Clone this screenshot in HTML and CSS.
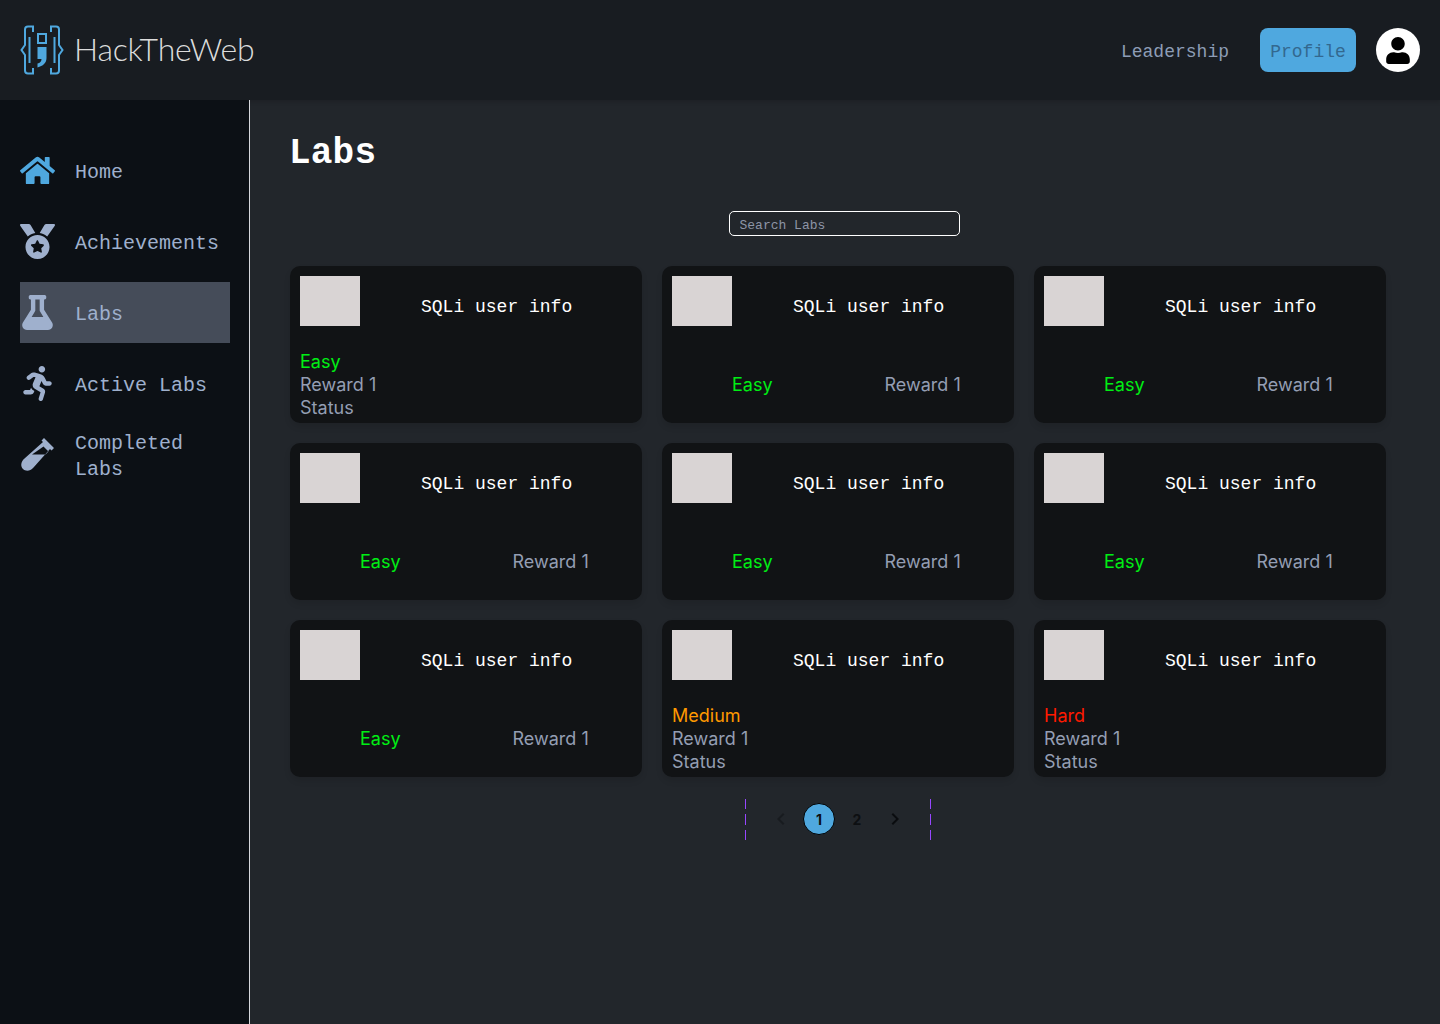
FILE: index.html
```html
<!DOCTYPE html>
<html lang="en">
<head>
  <meta charset="UTF-8">
  <title>HackTheWeb - Labs</title>
  <link rel="stylesheet" href="styles.css">
</head>
<body>
  <!-- Top bar -->
  <header class="topbar">
    <div class="brand">
      <svg class="brand-mark" viewBox="0 0 44 50" fill="none" stroke="#4fa8df" stroke-width="2">
        <path d="M13 7V1.500H8Q5 1.500 5 4.500V20L1.500 25L5 30V45.500Q5 48.500 8 48.500H13V43"/>
        <path d="M9.500 12V38"/>
        <g transform="matrix(-1 0 0 1 44 0)">
          <path d="M13 7V1.500H8Q5 1.500 5 4.500V20L1.500 25L5 30V45.500Q5 48.500 8 48.500H13V43"/>
          <path d="M9.500 12V38"/>
        </g>
        <rect x="18" y="9" width="8" height="9"/>
        <path d="M17.500 22H26.500V33C26.500 38 23 41 17.500 42.500V38.500C20 38 21.500 36.500 21.500 34H17.500Z" fill="#4fa8df" stroke="none"/>
      </svg>
      <span class="brand-name">HackTheWeb</span>
    </div>
    <nav class="topnav">
      <a class="topnav-link" href="#">Leadership</a>
      <a class="profile-btn" href="#">Profile</a>
      <span class="avatar">
        <svg viewBox="0 0 448 512"><path d="M224 256c70.700 0 128-57.300 128-128S294.700 0 224 0 96 57.300 96 128s57.300 128 128 128zm89.600 32h-16.700c-22.200 10.200-46.900 16-72.900 16s-50.600-5.800-72.900-16h-16.700C60.200 288 0 348.200 0 422.400V464c0 26.500 21.500 48 48 48h352c26.500 0 48-21.500 48-48v-41.600c0-74.200-60.200-134.400-134.400-134.400z"/></svg>
      </span>
    </nav>
  </header>

  <div class="layout">
    <!-- Sidebar -->
    <aside class="sidebar">
      <a class="side-item" href="#">
        <svg class="side-icon side-icon-home" viewBox="0 0 576 512"><path d="M280.370 148.260L96 300.110V464a16 16 0 0 0 16 16l112.060-.29a16 16 0 0 0 15.920-16V368a16 16 0 0 1 16-16h64a16 16 0 0 1 16 16v95.640a16 16 0 0 0 16 16.050L464 480a16 16 0 0 0 16-16V300L295.670 148.260a12.190 12.190 0 0 0-15.300 0zM571.600 251.470L488 182.560V44.050a12 12 0 0 0-12-12h-56a12 12 0 0 0-12 12v72.610L318.470 43a48 48 0 0 0-61 0L4.340 251.470a12 12 0 0 0-1.600 16.900l25.500 31A12 12 0 0 0 45.150 301l235.220-193.740a12.190 12.190 0 0 1 15.300 0L530.900 301a12 12 0 0 0 16.900-1.600l25.500-31a12 12 0 0 0-1.700-16.930z"/></svg>
        <span>Home</span>
      </a>
      <a class="side-item" href="#">
        <svg class="side-icon" viewBox="0 0 512 512"><path d="M223.750 130.750L154.620 15.540A31.997 31.997 0 0 0 127.180 0H16.030C3.080 0-4.500 14.570 2.920 25.180l111.270 158.960c29.720-27.770 67.520-46.830 109.560-53.390zM495.970 0H384.820c-11.240 0-21.660 5.900-27.440 15.540l-69.130 115.210c42.040 6.560 79.840 25.620 109.560 53.380L509.080 25.180C516.500 14.570 508.920 0 495.970 0zM256 160c-97.200 0-176 78.800-176 176s78.800 176 176 176 176-78.800 176-176-78.800-176-176-176zm92.520 157.260l-37.930 36.960 8.970 52.220c1.600 9.360-8.260 16.510-16.650 12.090L256 393.880l-46.900 24.650c-8.400 4.450-18.250-2.740-16.650-12.090l8.970-52.220-37.930-36.960c-6.820-6.640-3.050-18.230 6.350-19.590l52.430-7.640 23.430-47.520c1.780-3.560 5.220-5.400 8.660-5.400 3.400 0 6.860 1.800 8.600 5.400l23.430 47.520 52.430 7.640c9.400 1.360 13.170 12.950 6.350 19.590z"/></svg>
        <span>Achievements</span>
      </a>
      <a class="side-item side-item-active" href="#">
        <svg class="side-icon" viewBox="0 0 448 512"><path d="M437.200 403.500L320 215V64h8c13.300 0 24-10.700 24-24V24c0-13.300-10.700-24-24-24H120c-13.300 0-24 10.700-24 24v16c0 13.300 10.700 24 24 24h8v151L10.800 403.500C-18.500 450.600 15.300 512 70.900 512h306.200c55.700 0 89.400-61.500 60.100-108.500zM137.900 320l48.200-77.600c3.700-5.200 5.800-11.600 5.800-18.400V64h64v160c0 6.900 2.200 13.200 5.800 18.400l48.200 77.600h-172z"/></svg>
        <span>Labs</span>
      </a>
      <a class="side-item" href="#">
        <svg class="side-icon" viewBox="0 0 416 512"><path d="M272 96c26.510 0 48-21.490 48-48S298.510 0 272 0s-48 21.490-48 48 21.490 48 48 48zM113.690 317.470l-14.800 34.520H32c-17.670 0-32 14.330-32 32s14.330 32 32 32h77.450c19.250 0 36.580-11.440 44.110-29.090l8.790-20.520-10.670-6.300c-17.320-10.230-30.060-25.370-37.990-42.610zM384 223.990h-44.030l-26.060-53.250c-12.500-25.550-35.450-44.230-61.780-50.940l-71.080-21.140c-28.300-6.800-57.770-.55-80.840 17.140l-39.670 30.410c-14.030 10.750-16.690 30.830-5.920 44.860s30.840 16.660 44.860 5.920l39.690-30.410c7.670-5.890 17.440-8 25.270-6.140l14.700 4.370-37.460 87.390c-12.620 29.480-1.310 64.010 26.300 80.310l84.980 50.170-27.470 87.730c-5.280 16.860 4.110 34.810 20.970 40.090 3.190 1 6.410 1.480 9.580 1.480 13.610 0 26.230-8.770 30.520-22.450l31.640-101.060c5.910-20.770-2.890-43.080-21.640-54.390l-61.240-36.140 31.310-78.280 20.270 41.430c8 16.340 24.920 26.890 43.110 26.890H384c17.670 0 32-14.330 32-32s-14.330-31.990-32-31.990z"/></svg>
        <span>Active Labs</span>
      </a>
      <a class="side-item" href="#">
        <svg class="side-icon" viewBox="0 0 35 35"><path fill-rule="evenodd" d="M24 1L34 11L31.500 13.500L30 12L13.500 30.500C10 34.500 5.500 34.500 3 32C.5 29.500.5 25 4.500 21.500L23 5L21.500 3.500ZM23.500 9.500L12 17.500H25.500L28.500 14.500Z"/></svg>
        <span>Completed<br>Labs</span>
      </a>
    </aside>

    <!-- Main content -->
    <main class="content">
      <h1 class="page-title">Labs</h1>
      <div class="search-row">
        <input class="search-input" type="text" placeholder="Search Labs">
      </div>

      <div class="lab-grid">
        <div class="lab-card">
          <div class="lab-head"><div class="lab-thumb"></div><div class="lab-title">SQLi user info</div></div>
          <div class="lab-stack"><span class="easy">Easy</span><span>Reward 1</span><span>Status</span></div>
        </div>
        <div class="lab-card">
          <div class="lab-head"><div class="lab-thumb"></div><div class="lab-title">SQLi user info</div></div>
          <div class="lab-meta"><span class="easy">Easy</span><span>Reward 1</span></div>
        </div>
        <div class="lab-card">
          <div class="lab-head"><div class="lab-thumb"></div><div class="lab-title">SQLi user info</div></div>
          <div class="lab-meta"><span class="easy">Easy</span><span>Reward 1</span></div>
        </div>
        <div class="lab-card">
          <div class="lab-head"><div class="lab-thumb"></div><div class="lab-title">SQLi user info</div></div>
          <div class="lab-meta"><span class="easy">Easy</span><span>Reward 1</span></div>
        </div>
        <div class="lab-card">
          <div class="lab-head"><div class="lab-thumb"></div><div class="lab-title">SQLi user info</div></div>
          <div class="lab-meta"><span class="easy">Easy</span><span>Reward 1</span></div>
        </div>
        <div class="lab-card">
          <div class="lab-head"><div class="lab-thumb"></div><div class="lab-title">SQLi user info</div></div>
          <div class="lab-meta"><span class="easy">Easy</span><span>Reward 1</span></div>
        </div>
        <div class="lab-card">
          <div class="lab-head"><div class="lab-thumb"></div><div class="lab-title">SQLi user info</div></div>
          <div class="lab-meta"><span class="easy">Easy</span><span>Reward 1</span></div>
        </div>
        <div class="lab-card">
          <div class="lab-head"><div class="lab-thumb"></div><div class="lab-title">SQLi user info</div></div>
          <div class="lab-stack"><span class="medium">Medium</span><span>Reward 1</span><span>Status</span></div>
        </div>
        <div class="lab-card">
          <div class="lab-head"><div class="lab-thumb"></div><div class="lab-title">SQLi user info</div></div>
          <div class="lab-stack"><span class="hard">Hard</span><span>Reward 1</span><span>Status</span></div>
        </div>
      </div>

      <!-- Pagination -->
      <div class="pager">
        <svg class="pager-arrow pager-arrow-off" viewBox="0 0 24 24"><path d="M15.410 7.410 14 6l-6 6 6 6 1.410-1.410L10.830 12z"/></svg>
        <span class="pager-num pager-num-on">1</span>
        <span class="pager-num">2</span>
        <svg class="pager-arrow" viewBox="0 0 24 24"><path d="M10 6 8.590 7.410 13.170 12l-4.580 4.590L10 18l6-6z"/></svg>
      </div>
    </main>
  </div>
</body>
</html>
```

FILE: styles.css
```css
* {
  margin: 0;
  padding: 0;
  box-sizing: border-box;
}

body {
  font-family: "Inter", "Liberation Sans", sans-serif;
  background-color: #22262b;
  color: #fff;
  height: 1024px;
  overflow: hidden;
}

a {
  text-decoration: none;
}

/* Top bar */
.topbar {
  height: 100px;
  background-color: #181c21;
  display: flex;
  align-items: center;
  justify-content: space-between;
  padding: 0 20px;
  box-shadow: 0 2px 4px rgba(0, 0, 0, 0.15);
}

.brand {
  display: flex;
  align-items: center;
  gap: 10px;
}

.brand-mark {
  width: 44px;
  height: 50px;
}

.brand-name {
  font-family: "Lato", sans-serif;
  font-weight: 300;
  font-size: 32px;
  letter-spacing: -0.2px;
  color: #dcdcdc;
  padding-bottom: 4px;
}

.topnav {
  display: flex;
  align-items: center;
}

.topnav-link,
.profile-btn {
  font-family: "Liberation Mono", monospace;
  font-size: 18px;
}

.topnav-link {
  color: #8d9db6;
  margin-right: 31px;
  padding-top: 4px;
}

.profile-btn {
  width: 96px;
  height: 44px;
  line-height: 48px;
  text-align: center;
  background-color: #4fa8df;
  color: #33688f;
  border-radius: 8px;
  margin-right: 20px;
}

.avatar {
  width: 44px;
  height: 44px;
  border-radius: 50%;
  background-color: #fff;
  display: flex;
  align-items: center;
  justify-content: center;
}

.avatar svg {
  width: 24px;
  height: 27px;
}

/* Layout */
.layout {
  display: flex;
  height: 924px;
}

.sidebar {
  width: 250px;
  background-color: #0c1015;
  border-right: 1px solid #d6d8dc;
  padding: 40px 19px 0 20px;
}

.side-item {
  display: flex;
  align-items: center;
  height: 61px;
  margin-bottom: 10px;
  font-family: "Liberation Mono", monospace;
  font-size: 20px;
  line-height: 26px;
  color: #9fb0cd;
}

.side-item span {
  margin-left: 20px;
  padding-top: 4px;
}

.side-item-active {
  background-color: #454c59;
}

.side-icon {
  width: 35px;
  height: 35px;
  fill: #9fb0cd;
  flex-shrink: 0;
}

.side-icon-home {
  fill: #4fa8df;
}

/* Main */
.content {
  flex: 1;
  padding: 31px 54px 0 40px;
}

.page-title {
  font-family: "Liberation Mono", monospace;
  font-size: 36px;
  line-height: 46px;
  font-weight: 700;
  color: #fff;
  letter-spacing: 0.2px;
  margin-left: -1px;
}

.search-row {
  display: flex;
  justify-content: center;
  margin-top: 34px;
  margin-left: 12px;
}

.search-input {
  width: 231px;
  height: 25px;
  background: transparent;
  border: 1px solid #fff;
  border-radius: 5px;
  padding: 3px 9px 0 10px;
  font-family: "Liberation Mono", monospace;
  font-size: 13px;
  color: #fff;
}

.search-input::placeholder {
  color: #8d95a6;
  opacity: 1;
}

.lab-grid {
  display: grid;
  grid-template-columns: repeat(3, 352px);
  grid-auto-rows: 157px;
  gap: 20px;
  margin-top: 30px;
}

.lab-card {
  background-color: #111315;
  border-radius: 10px;
  padding: 10px;
  box-shadow: 0 4px 6px rgba(0, 0, 0, 0.1);
  font-size: 18px;
  line-height: 23px;
  color: #949eb3;
}

.lab-head {
  display: flex;
  height: 50px;
}

.lab-thumb {
  width: 60px;
  height: 50px;
  background-color: #d9d4d4;
}

.lab-title {
  margin-left: 61px;
  padding-top: 19px;
  font-family: "Liberation Mono", monospace;
  font-size: 18px;
  line-height: 24px;
  color: #fff;
}

.lab-stack {
  display: flex;
  flex-direction: column;
  margin-top: 24px;
}

.lab-meta {
  display: flex;
  gap: 112px;
  margin-top: 47px;
  padding-left: 60px;
}

.easy {
  color: #00ee14;
}

.medium {
  color: #ff9900;
}

.hard {
  color: #ff1a00;
}

/* Pagination */
.pager {
  width: 186px;
  height: 42px;
  margin: 22px 0 0 455px;
  padding-bottom: 2px;
  display: flex;
  align-items: center;
  justify-content: center;
  gap: 6px;
  background-image:
    repeating-linear-gradient(to bottom, #9747ff 0 10px, transparent 10px 15.5px),
    repeating-linear-gradient(to bottom, #9747ff 0 10px, transparent 10px 15.5px);
  background-size: 1px 100%;
  background-position: left top, right top;
  background-repeat: no-repeat;
}

.pager-arrow {
  width: 24px;
  height: 24px;
  margin: 0 4px;
  fill: #0a0c0f;
}

.pager-arrow-off {
  opacity: 0.4;
}

.pager-num {
  width: 32px;
  height: 32px;
  border-radius: 50%;
  display: flex;
  align-items: center;
  justify-content: center;
  font-size: 14px;
  font-weight: 700;
  color: #0d0f12;
}

.pager-num-on {
  background-color: #4fa8df;
  border: 1px solid #000;
}
```
